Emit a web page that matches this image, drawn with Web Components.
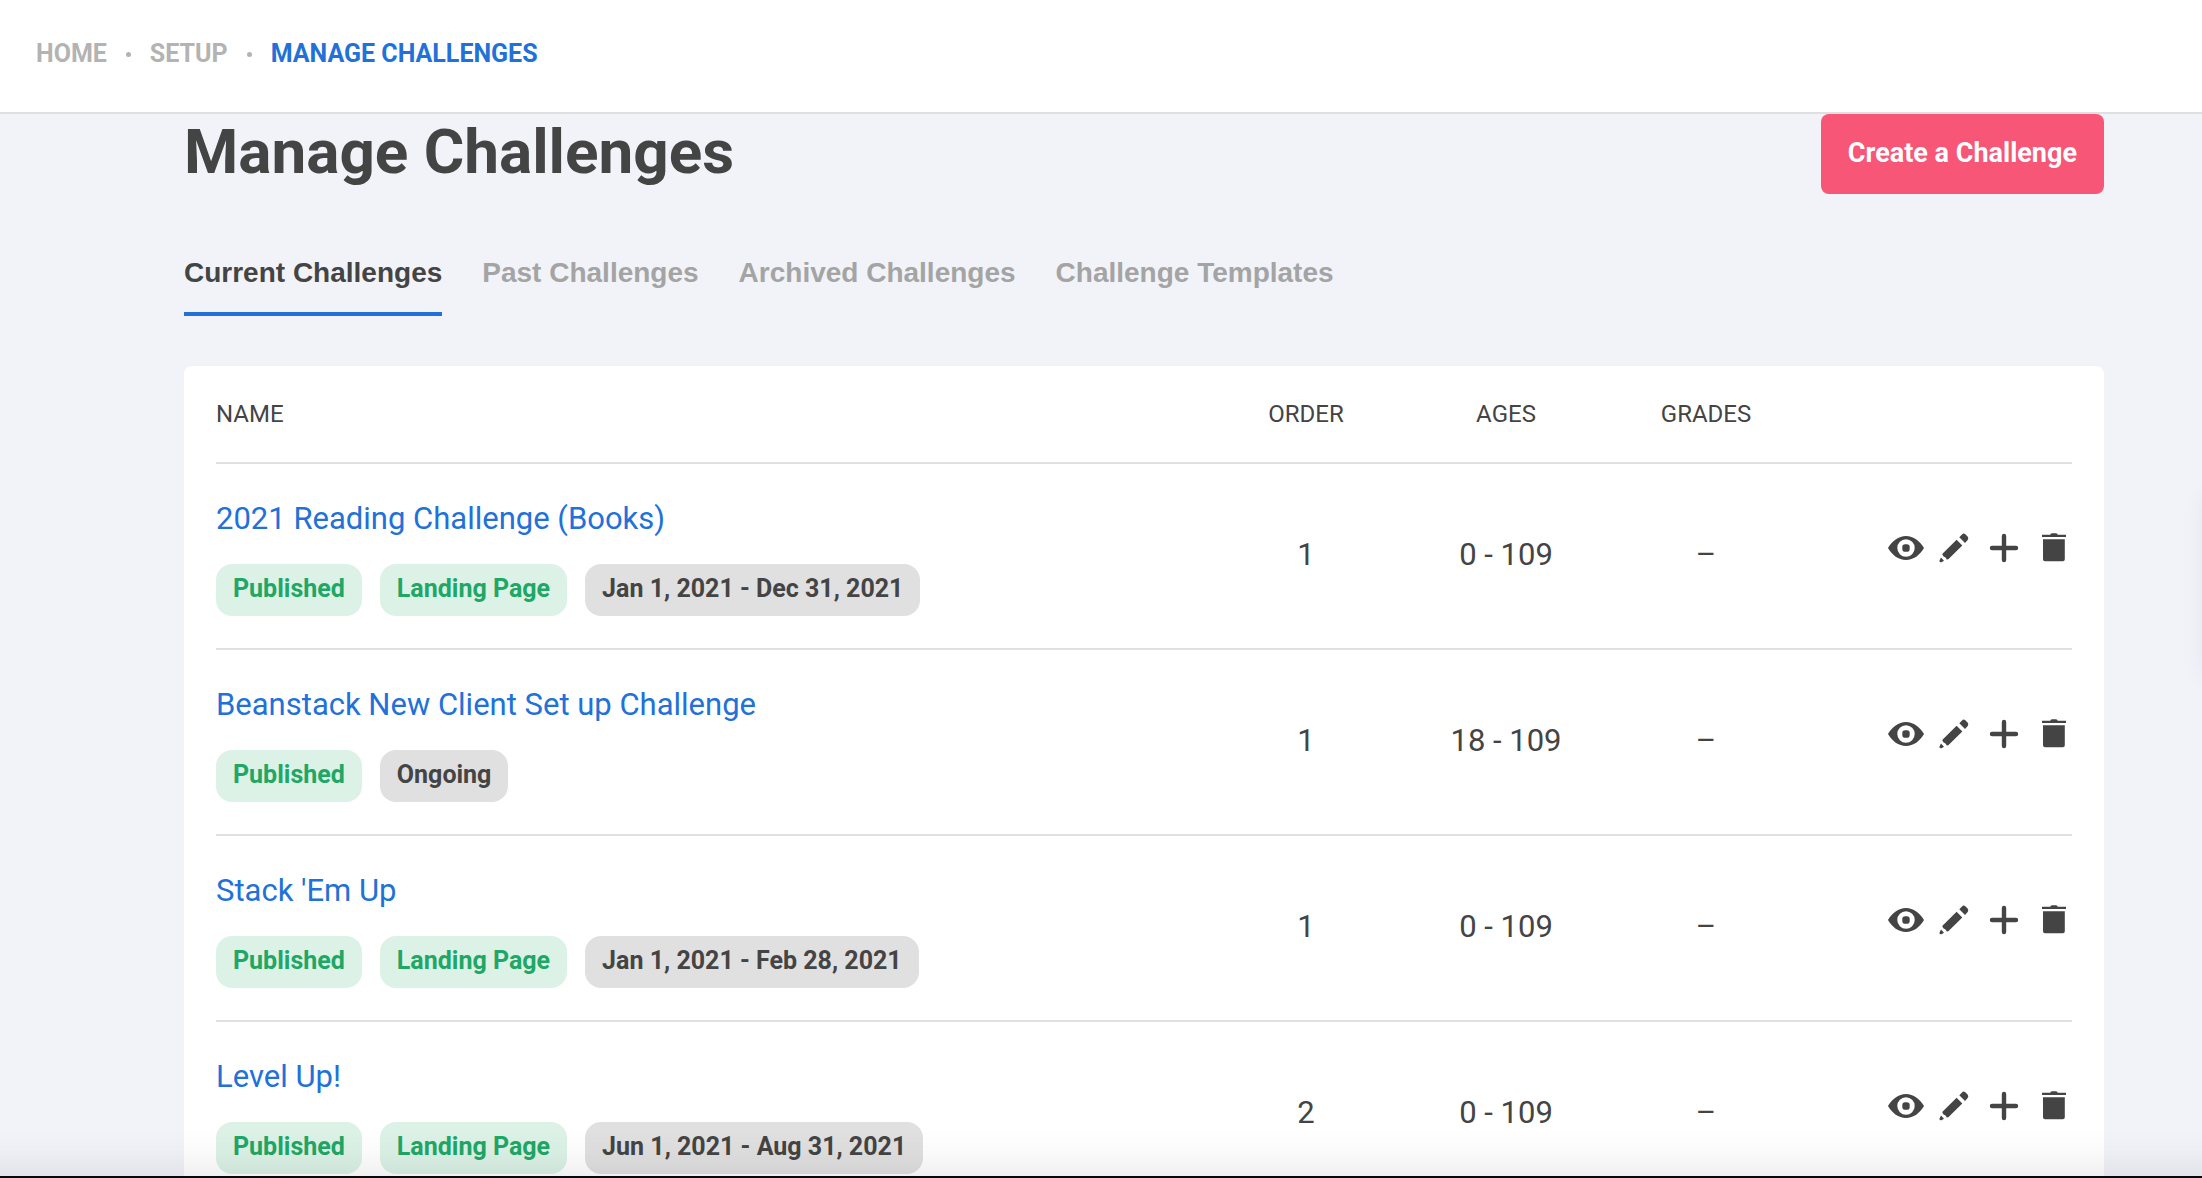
<!DOCTYPE html>
<html lang="en">
<head>
<meta charset="utf-8">
<title>Manage Challenges</title>
<style>
html, body {
    margin: 0;
    height: 100%;
    overflow: hidden;
}
body {
    --ink: #444;
    --blue: #2271d8;
    --line: #e0e0e0;
    background: #f1f3f8;
    color: var(--ink);
    font-family: Roboto, "Liberation Sans", sans-serif;
}
</style>
</head>
<body>
<app-shell>
    <bread-crumbs slot="top">
        <a href="#home">HOME</a>
        <a href="#setup">SETUP</a>
        <a href="#challenges" aria-current="page">MANAGE CHALLENGES</a>
    </bread-crumbs>
    <page-heading>
        Manage Challenges
        <action-button slot="action">Create a Challenge</action-button>
    </page-heading>
    <tab-bar>
        <a href="#current" aria-current="true">Current Challenges</a>
        <a href="#past">Past Challenges</a>
        <a href="#archived">Archived Challenges</a>
        <a href="#templates">Challenge Templates</a>
    </tab-bar>
    <challenge-table></challenge-table>
</app-shell>

<script>
function define(name, html, setup) {
    const template = document.createElement('template');
    template.innerHTML = html;

    customElements.define(name, class extends HTMLElement {
        constructor() {
            super();
            const root = this.attachShadow({ mode: 'open' });
            root.appendChild(template.content.cloneNode(true));
        }

        connectedCallback() {
            if (setup && !this.ready) {
                this.ready = true;
                setup(this, this.shadowRoot);
            }
        }
    });
}

define('app-shell', `
<style>
:host {
    display: flex;
    flex-direction: column;
    height: 100vh;
    overflow: hidden;
}
header {
    flex: none;
    background: #fff;
    border-bottom: 2px solid var(--line);
}
main {
    flex: 1;
    min-height: 0;
    padding: 0 98px 0 184px;
    overflow: hidden;
}
/* closed side drawer, only its shadow shows */
.drawer {
    position: fixed;
    left: 100%;
    top: 496px;
    width: 60px;
    height: 180px;
    box-shadow: 0 0 24px rgba(60, 40, 120, .05);
}
.edge {
    position: fixed;
    left: 0;
    right: 0;
    bottom: 0;
    height: 48px;
    box-sizing: border-box;
    border-bottom: 2px solid #08080c;
    background: linear-gradient(rgba(0, 0, 0, 0), rgba(0, 0, 0, .02) 50%, rgba(0, 0, 0, .06));
    pointer-events: none;
}
</style>
<header><slot name="top"></slot></header>
<main><slot></slot></main>
<div class="drawer"></div>
<div class="edge"></div>
`);

define('bread-crumbs', `
<style>
:host {
    display: block;
    padding: 40px 36px 44px;
}
nav {
    display: flex;
    align-items: center;
    gap: 19px;
    font-size: 25px;
    font-weight: 700;
    line-height: 28px;
}
a {
    color: #b3b3b3;
    text-decoration: none;
}
a[aria-current] {
    color: var(--blue);
}
i {
    width: 5px;
    height: 5px;
    border-radius: 50%;
    background: #b3b3b3;
}
</style>
<nav aria-label="Breadcrumb"></nav>
`, (host, root) => {
    const nav = root.querySelector('nav');
    [...host.querySelectorAll('a')].forEach((link, i) => {
        if (i) {
            nav.appendChild(document.createElement('i'));
        }
        nav.appendChild(link);
    });
});

define('page-heading', `
<style>
:host {
    display: flex;
    justify-content: space-between;
    align-items: flex-start;
    margin-bottom: 62px;
}
h1 {
    margin: 0;
    font-size: 62px;
    font-weight: 700;
    line-height: 76px;
}
</style>
<h1><slot></slot></h1>
<slot name="action"></slot>
`);

define('action-button', `
<style>
:host {
    display: block;
}
button {
    display: block;
    border: 0;
    border-radius: 8px;
    padding: 25px 27px 27px;
    background: #f75676;
    color: #fff;
    font: 700 27px/28px Roboto, sans-serif;
    cursor: pointer;
}
</style>
<button type="button"><slot></slot></button>
`);

define('tab-bar', `
<style>
:host {
    display: flex;
    gap: 40px;
    margin-bottom: 50px;
    font: 700 28px/34px "Liberation Sans", Arial, sans-serif;
}
::slotted(a) {
    padding-bottom: 22px;
    border-bottom: 4px solid transparent;
    color: #a4a4a4;
    text-decoration: none;
}
::slotted(a[aria-current]) {
    color: var(--ink);
    border-color: var(--blue);
}
</style>
<slot></slot>
`);

define('status-badge', `
<style>
:host {
    display: block;
    padding: 10px 17px 12px;
    border-radius: 16px;
    background: var(--line);
    font-size: 25px;
    font-weight: 700;
    line-height: 30px;
    white-space: nowrap;
}
:host([live]) {
    background: #dcf2e6;
    color: #20a765;
}
</style>
<slot></slot>
`);

const icons = {
    View: `<path fill-rule="evenodd" d="M2 18C6 11 12.500 6 20 6S34 11 38 18C34 25 27.500 30 20 30S6 25 2 18ZM20 9.300a8.700 8.700 0 1 0 0 17.400a8.700 8.700 0 1 0 0-17.400Z"/><rect x="16.300" y="14.300" width="7.400" height="7.400" rx="2.800"/>`,
    Edit: `<path d="M23.300 7.300L26 4.500Q27.500 2.900 29.300 4.200L31.600 6.400Q33 8 31.700 9.900L29 13ZM20.600 9.700L26.300 15.500L12.300 29.300L10.800 29.400L9.500 27.500L7.300 26.300L6.200 24ZM5 27.500L8 30.700L5.500 32.200Q3 32.800 3.500 30.500Z"/>`,
    Add: `<path d="M18 6v24M6 18h24" fill="none" stroke="currentColor" stroke-width="4.400" stroke-linecap="round"/>`,
    Delete: `<path d="M6 4.800H14.300Q14.500 3.300 16 3.300H20Q21.500 3.300 21.700 4.800H30V7H6ZM7 9.300H28.800V29.200Q28.800 31.200 26.800 31.200H9Q7 31.200 7 29.200Z"/>`
};

define('row-actions', `
<style>
:host {
    display: flex;
    justify-content: flex-end;
    gap: 14px;
}
button {
    border: 0;
    padding: 0;
    background: none;
    color: inherit;
    cursor: pointer;
}
svg {
    display: block;
    width: 36px;
    height: 36px;
    overflow: visible;
    fill: currentColor;
}
</style>
`, (host, root) => {
    for (const name in icons) {
        const button = document.createElement('button');
        button.type = 'button';
        button.setAttribute('aria-label', name);
        button.innerHTML = `<svg viewBox="0 0 36 36" aria-hidden="true">${icons[name]}</svg>`;
        root.appendChild(button);
    }
});

const challenges = [
    { name: '2021 Reading Challenge (Books)', landing: true, dates: 'Jan 1, 2021 - Dec 31, 2021', order: 1, ages: '0 - 109' },
    { name: 'Beanstack New Client Set up Challenge', dates: 'Ongoing', order: 1, ages: '18 - 109' },
    { name: "Stack 'Em Up", landing: true, dates: 'Jan 1, 2021 - Feb 28, 2021', order: 1, ages: '0 - 109' },
    { name: 'Level Up!', landing: true, dates: 'Jun 1, 2021 - Aug 31, 2021', order: 2, ages: '0 - 109' }
];

define('challenge-table', `
<style>
:host {
    display: block;
    padding: 0 32px 32px;
    border-radius: 8px;
    background: #fff;
}
table {
    width: 100%;
    border-collapse: separate;
    border-spacing: 0;
    table-layout: fixed;
    font-size: 31px;
    line-height: 46px;
}
th, td {
    padding: 0 0 2px;
    border-bottom: 2px solid var(--line);
    text-align: center;
}
th {
    width: 200px;
    padding: 34px 0;
    font-size: 24px;
    font-weight: 400;
    line-height: 28px;
}
th:first-child {
    width: auto;
}
th:last-child {
    width: 266px;
}
th:first-child, td:first-child {
    text-align: left;
}
td:first-child {
    padding: 32px 0;
}
td:last-child {
    padding-bottom: 16px;
}
a {
    display: block;
    margin-bottom: 22px;
    color: var(--blue);
    text-decoration: none;
}
.badges {
    display: flex;
    gap: 18px;
}
</style>
<table>
<thead>
<tr><th>NAME</th><th>ORDER</th><th>AGES</th><th>GRADES</th><th aria-label="Actions"></th></tr>
</thead>
<tbody></tbody>
</table>
`, (host, root) => {
    root.querySelector('tbody').innerHTML = challenges.map(c => `
<tr>
<td>
<a href="#challenge">${c.name}</a>
<div class="badges">
<status-badge live>Published</status-badge>
${c.landing ? '<status-badge live>Landing Page</status-badge>' : ''}
<status-badge>${c.dates}</status-badge>
</div>
</td>
<td>${c.order}</td>
<td>${c.ages}</td>
<td>–</td>
<td><row-actions></row-actions></td>
</tr>`).join('');
});
</script>
</body>
</html>
